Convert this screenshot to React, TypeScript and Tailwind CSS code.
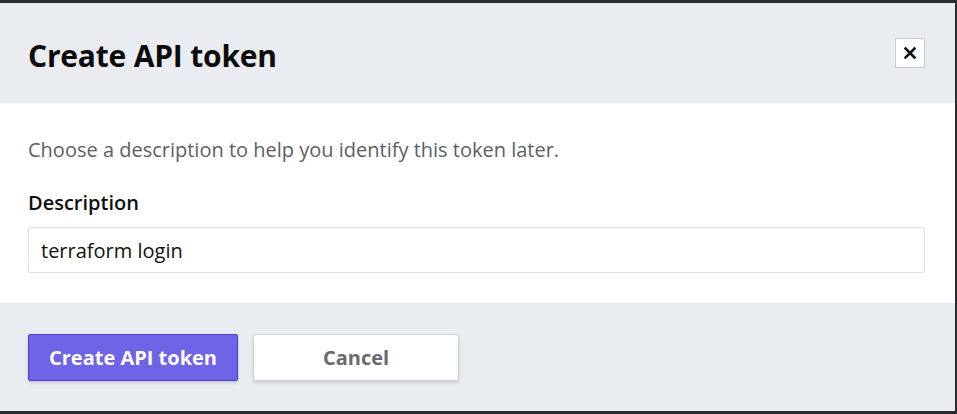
import { useState } from 'react'

export default function App() {
  const [description, setDescription] = useState('terraform login')

  return (
    <div className="w-[957px] h-[414px] bg-[#2a2c30] pt-[3px] pr-[2px] pb-[3px] font-['Open_Sans',sans-serif]">
      <div className="flex flex-col h-full">
        {/* Header */}
        <div className="h-[100px] bg-[#e9ecf0] flex items-center justify-between pl-[28px] pr-[30px] shrink-0">
          <h2 className="pt-[6px] text-[30px] font-bold text-[#0b0b0b] tracking-[-0.2px] leading-[40px]">Create API token</h2>
          <button className="w-[30px] h-[30px] bg-white border border-[#c8ccd1] flex items-center justify-center">
            <svg width="12" height="12" viewBox="0 0 12 12">
              <path d="M1.5 1.5 L10.5 10.5 M10.5 1.5 L1.5 10.5" stroke="#111" strokeWidth="2.6" strokeLinecap="square" />
            </svg>
          </button>
        </div>

        {/* Body */}
        <div className="h-[200px] bg-white pl-[28px] pr-[30px] pt-[33px] shrink-0">
          <p className="text-[20px] text-[#5c5f64] leading-[28px]">
            Choose a description to help you identify this token later.
          </p>
          <label className="block mt-[25px] text-[20px] font-semibold text-[#111] leading-[28px]">Description</label>
          <input
            value={description}
            onChange={e => setDescription(e.target.value)}
            className="mt-[10px] w-full h-[46px] border border-[#dfe1e4] rounded-[2px] px-[12px] text-[20px] text-[#111] outline-none shadow-[inset_0_1px_2px_rgba(0,0,0,0.04)]"
          />
        </div>

        {/* Footer */}
        <div className="flex-1 bg-[#e9ecf0] flex items-start gap-[15px] pl-[28px] pt-[31px]">
          <button className="w-[210px] h-[47px] bg-[#6f63e6] border border-[#4b3fcf] rounded-[2px] text-white text-[20px] font-bold shadow-[0_2px_3px_rgba(0,0,0,0.15)]">
            Create API token
          </button>
          <button className="w-[206px] h-[47px] bg-white border border-[#cfd2d6] rounded-[2px] text-[#676a70] text-[20px] font-bold shadow-[0_2px_3px_rgba(0,0,0,0.12)]">
            Cancel
          </button>
        </div>
      </div>
    </div>
  )
}
